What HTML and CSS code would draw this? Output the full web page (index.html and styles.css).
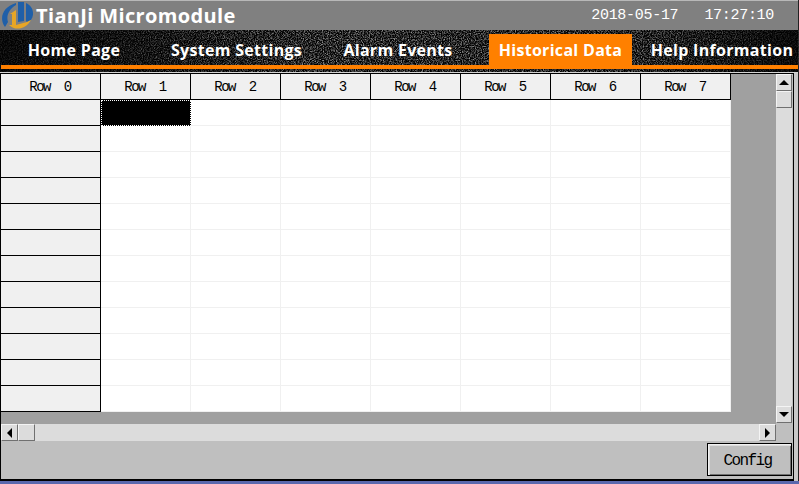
FILE: index.html
```html
<!DOCTYPE html>
<html lang="en">
<head>
<meta charset="utf-8">
<title>TianJi Micromodule</title>
<link rel="stylesheet" href="styles.css">
</head>
<body>
<div class="screen">
  <header class="titlebar">
    <svg class="logo" viewBox="0 0 32 30" width="32" height="30" aria-hidden="true">
      <path d="M4 26 C-2 18 1 6 15 2 L15 4 C8 8 5 15 7 21 Z" fill="#1f5fa8"/>
      <path d="M17 1 L23 1 L23 20 L17 21 Z" fill="#1f5fa8"/>
      <path d="M25 2 C32 5 34 13 30 19 L26 21 L25 20 Z" fill="#1f5fa8"/>
      <path d="M9 13 L15 9 L15 24 L11 24 L11 13 Z" fill="#e8a625"/>
      <path d="M8 24 L15 24 L26 21 L30 19 C26 27 15 31 8 24 Z" fill="#e8a625"/>
    </svg>
    <div class="brand">TianJi Micromodule</div>
    <div class="clock">2018-05-17&nbsp;&nbsp;&nbsp;17:27:10</div>
  </header>
  <nav class="nav">
    <svg class="noise" width="799" height="42" aria-hidden="true">
      <defs>
        <filter id="grain" x="0" y="0" width="100%" height="100%"><feTurbulence type="fractalNoise" baseFrequency="0.85" numOctaves="2" seed="4"/><feColorMatrix values="0 0 0 0 1  0 0 0 0 1  0 0 0 0 1  2.4 0 0 0 -0.95"/></filter>
        <linearGradient id="fade"><stop offset="0" stop-color="#222"/><stop offset="0.15" stop-color="#444"/><stop offset="0.4" stop-color="#999"/><stop offset="0.8" stop-color="#888"/><stop offset="1" stop-color="#222"/></linearGradient>
        <mask id="fademask"><rect width="799" height="42" fill="url(#fade)"/></mask>
      </defs>
      <g mask="url(#fademask)"><rect width="799" height="42" filter="url(#grain)"/></g>
    </svg>
    <div class="tabs">
      <a class="tab tab-home">Home Page</a>
      <a class="tab tab-system">System Settings</a>
      <a class="tab tab-alarm">Alarm Events</a>
      <a class="tab tab-active">Historical Data</a>
      <a class="tab tab-help">Help Information</a>
    </div>
    <div class="rule"></div>
  </nav>
  <div class="hairline"></div>
  <main class="panel">
    <div class="sheet">
      <div class="grid">
        <div class="hd">Row&nbsp;&nbsp;0</div><div class="hd">Row&nbsp;&nbsp;1</div><div class="hd">Row&nbsp;&nbsp;2</div><div class="hd">Row&nbsp;&nbsp;3</div><div class="hd">Row&nbsp;&nbsp;4</div><div class="hd">Row&nbsp;&nbsp;5</div><div class="hd">Row&nbsp;&nbsp;6</div><div class="hd">Row&nbsp;&nbsp;7</div>
        <div class="lab"></div><div class="cell selected"></div><div class="cell"></div><div class="cell"></div><div class="cell"></div><div class="cell"></div><div class="cell"></div><div class="cell"></div>
        <div class="lab"></div><div class="cell"></div><div class="cell"></div><div class="cell"></div><div class="cell"></div><div class="cell"></div><div class="cell"></div><div class="cell"></div>
        <div class="lab"></div><div class="cell"></div><div class="cell"></div><div class="cell"></div><div class="cell"></div><div class="cell"></div><div class="cell"></div><div class="cell"></div>
        <div class="lab"></div><div class="cell"></div><div class="cell"></div><div class="cell"></div><div class="cell"></div><div class="cell"></div><div class="cell"></div><div class="cell"></div>
        <div class="lab"></div><div class="cell"></div><div class="cell"></div><div class="cell"></div><div class="cell"></div><div class="cell"></div><div class="cell"></div><div class="cell"></div>
        <div class="lab"></div><div class="cell"></div><div class="cell"></div><div class="cell"></div><div class="cell"></div><div class="cell"></div><div class="cell"></div><div class="cell"></div>
        <div class="lab"></div><div class="cell"></div><div class="cell"></div><div class="cell"></div><div class="cell"></div><div class="cell"></div><div class="cell"></div><div class="cell"></div>
        <div class="lab"></div><div class="cell"></div><div class="cell"></div><div class="cell"></div><div class="cell"></div><div class="cell"></div><div class="cell"></div><div class="cell"></div>
        <div class="lab"></div><div class="cell"></div><div class="cell"></div><div class="cell"></div><div class="cell"></div><div class="cell"></div><div class="cell"></div><div class="cell"></div>
        <div class="lab"></div><div class="cell"></div><div class="cell"></div><div class="cell"></div><div class="cell"></div><div class="cell"></div><div class="cell"></div><div class="cell"></div>
        <div class="lab"></div><div class="cell"></div><div class="cell"></div><div class="cell"></div><div class="cell"></div><div class="cell"></div><div class="cell"></div><div class="cell"></div>
        <div class="lab"></div><div class="cell"></div><div class="cell"></div><div class="cell"></div><div class="cell"></div><div class="cell"></div><div class="cell"></div><div class="cell"></div>
      </div>
      <div class="vbar">
        <div class="sbtn"><span class="tri tri-up"></span></div>
        <div class="sbtn"></div>
        <div class="track"></div>
        <div class="sbtn"><span class="tri tri-down"></span></div>
      </div>
    </div>
    <div class="hbar">
      <div class="sbtn"><span class="tri tri-left"></span></div>
      <div class="sbtn thumb-h"></div>
      <div class="track"></div>
      <div class="sbtn"><span class="tri tri-right"></span></div>
    </div>
    <footer class="actions">
      <button class="config" type="button">Config</button>
    </footer>
  </main>
  <div class="desktop"></div>
</div>
</body>
</html>
```
FILE: styles.css
```css
* { box-sizing: border-box; }
html, body { margin: 0; padding: 0; }
body { width: 799px; height: 484px; overflow: hidden; background: #5a68ad; }
.screen { width: 799px; height: 484px; display: flex; flex-direction: column; background: #c8c8c8; border-right: 1px solid #222; }

.titlebar { height: 30px; flex: none; display: flex; align-items: center; background: #808080; border-top: 1px solid #b8b8b8; padding: 1px 24px 0 1px; }
.logo { flex: none; margin-top: -1px; }
.brand { margin-left: 3px; font: bold 20px/28px "Open Sans", sans-serif; letter-spacing: 0.35px; color: #fff; white-space: nowrap; }
.clock { margin-left: auto; font: 15px/28px "Liberation Mono", monospace; color: #fff; letter-spacing: -0.3px; white-space: nowrap; }

.nav { position: relative; height: 42px; flex: none; background: #020202; padding-top: 4px; }
.noise { position: absolute; left: 0; top: 0; }
.tabs { position: relative; height: 31px; display: flex; }
.tab { height: 31px; display: flex; align-items: center; justify-content: center; font: bold 16px/20px "Open Sans", sans-serif; letter-spacing: 0.3px; color: #fff; white-space: nowrap; }
.tab-home { margin-left: 27px; width: 94px; }
.tab-system { margin-left: 50px; width: 131px; }
.tab-alarm { margin-left: 43px; width: 106px; }
.tab-active { margin-left: 38px; width: 143px; background: #ff8000; }
.tab-help { margin-left: 20px; width: 140px; }
.rule { position: relative; height: 4px; margin-left: 1px; background: #ff8000; }

.hairline { height: 1px; flex: none; background: #d4d4d4; }

.panel { flex: none; height: 408px; width: 794px; display: flex; flex-direction: column; background: #bfbfbf; border: 1px solid #000; border-bottom-width: 2px; }
.sheet { display: flex; height: 350px; flex: none; }
.grid { width: 775px; display: grid; grid-template-columns: 100px repeat(7, 90px); grid-auto-rows: 26px; align-content: start; background: #a0a0a0; }
.hd { background: #f0f0f0; border-right: 1px solid #000; border-bottom: 1px solid #000; display: flex; align-items: center; justify-content: center; padding: 2px 1px 0 0; font: 14px/23px "Liberation Mono", monospace; letter-spacing: -1.5px; color: #000; }
.lab { background: #f0f0f0; border-right: 1px solid #000; border-bottom: 1px solid #000; }
.cell { background: #fff; border-right: 1px solid #f0f0f0; border-bottom: 1px solid #f0f0f0; }
.selected { background: #000; border: 1px dotted #fff; }

.vbar { flex: none; width: 16px; height: 349px; display: flex; flex-direction: column; background: #dcdcdc; }
.hbar { height: 17px; flex: none; display: flex; width: 775px; background: #dcdcdc; }
.hbar .sbtn { width: 17px; }
.track { flex: 1; }
.sbtn { flex: none; height: 17px; display: flex; align-items: center; justify-content: center; background: #dcdcdc; border: 1px solid; border-color: #f4f4f4 #707070 #707070 #f4f4f4; }
.tri { width: 0; height: 0; border-style: solid; border-color: transparent; }
.tri-up { border-width: 0 5px 5px; border-bottom-color: #000; }
.tri-down { border-width: 5px 5px 0; border-top-color: #000; }
.tri-left { border-width: 5px 5px 5px 0; border-right-color: #000; }
.tri-right { border-width: 5px 0 5px 5px; border-left-color: #000; }

.actions { flex: 1; display: flex; justify-content: flex-end; align-items: flex-start; padding: 2px 1px 0 0; }
.config { width: 85px; height: 33px; padding: 2px 4px 0 0; background: #bfbfbf; border: 1px solid #000; outline: none; box-shadow: inset 1px 1px 0 #f0f0f0, inset 2px 2px 0 #dcdcdc, inset -1px -1px 0 #707070; font: 16px/28px "Liberation Mono", monospace; letter-spacing: -1.6px; color: #000; }

.desktop { flex: 1; background: #5a68ad; margin-right: -1px; }
```
